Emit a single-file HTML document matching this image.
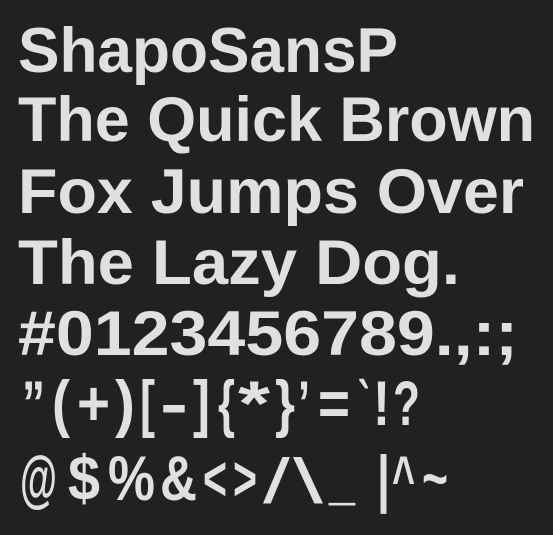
<!DOCTYPE html>
<html><head><meta charset="utf-8"><style>
html,body{margin:0;padding:0;background:#212121;}
svg{display:block}
text{font-family:"Liberation Sans",sans-serif;font-weight:bold;font-size:63px;fill:#e0e0e0;}
</style></head><body>
<svg width="553" height="535" viewBox="0 0 553 535" xmlns="http://www.w3.org/2000/svg">
<rect width="553" height="535" fill="#212121"/>
<text x="18" y="72" textLength="380" lengthAdjust="spacingAndGlyphs">ShapoSansP</text>
<text x="18" y="141" textLength="517" lengthAdjust="spacingAndGlyphs">The Quick Brown</text>
<text x="18" y="213" textLength="506" lengthAdjust="spacingAndGlyphs">Fox Jumps Over</text>
<text x="18" y="284" textLength="442" lengthAdjust="spacingAndGlyphs">The Lazy Dog.</text>
<text x="18" y="355" textLength="500" lengthAdjust="spacingAndGlyphs">#0123456789.,:;</text>
<g>
<text x="22" y="425" textLength="23" lengthAdjust="spacingAndGlyphs">”</text>
<text x="52" y="425" textLength="18" lengthAdjust="spacingAndGlyphs">(</text>
<text x="77" y="425" textLength="33" lengthAdjust="spacingAndGlyphs">+</text>
<text x="115" y="425" textLength="20" lengthAdjust="spacingAndGlyphs">)</text>
<text x="140" y="425" textLength="15" lengthAdjust="spacingAndGlyphs">[</text>
<text x="160" y="425" textLength="28" lengthAdjust="spacingAndGlyphs">-</text>
<text x="193" y="425" textLength="17" lengthAdjust="spacingAndGlyphs">]</text>
<text x="218" y="425" textLength="17" lengthAdjust="spacingAndGlyphs">{</text>
<text x="238" y="425" textLength="32" lengthAdjust="spacingAndGlyphs">*</text>
<text x="275" y="425" textLength="20" lengthAdjust="spacingAndGlyphs">}</text>
<text x="298" y="425" textLength="12" lengthAdjust="spacingAndGlyphs">’</text>
<text x="318" y="425" textLength="32" lengthAdjust="spacingAndGlyphs">=</text>
<text x="358" y="425" textLength="12" lengthAdjust="spacingAndGlyphs">`</text>
<text x="373" y="425" textLength="17" lengthAdjust="spacingAndGlyphs">!</text>
<text x="393" y="425" textLength="27" lengthAdjust="spacingAndGlyphs">?</text>
</g>
<g>
<text x="20" y="500" textLength="37" lengthAdjust="spacingAndGlyphs">@</text>
<text x="68" y="500" textLength="32" lengthAdjust="spacingAndGlyphs">$</text>
<text x="108" y="500" textLength="47" lengthAdjust="spacingAndGlyphs">%</text>
<text x="160" y="500" textLength="37" lengthAdjust="spacingAndGlyphs">&amp;</text>
<text x="203" y="500" textLength="24" lengthAdjust="spacingAndGlyphs">&lt;</text>
<text x="233" y="500" textLength="24" lengthAdjust="spacingAndGlyphs">&gt;</text>
<text x="263" y="503" textLength="27" lengthAdjust="spacingAndGlyphs" style="font-weight:normal">/</text>
<text x="293" y="503" textLength="30" lengthAdjust="spacingAndGlyphs" style="font-weight:normal">\</text>
<text x="329" y="497" textLength="26" lengthAdjust="spacingAndGlyphs" style="font-size:70px">_</text>
<text x="377" y="500" textLength="13" lengthAdjust="spacingAndGlyphs">|</text>
<text x="392" y="500" textLength="23" lengthAdjust="spacingAndGlyphs">^</text>
<text x="422" y="500" textLength="26" lengthAdjust="spacingAndGlyphs">~</text>
</g>
</svg>
</body></html>
